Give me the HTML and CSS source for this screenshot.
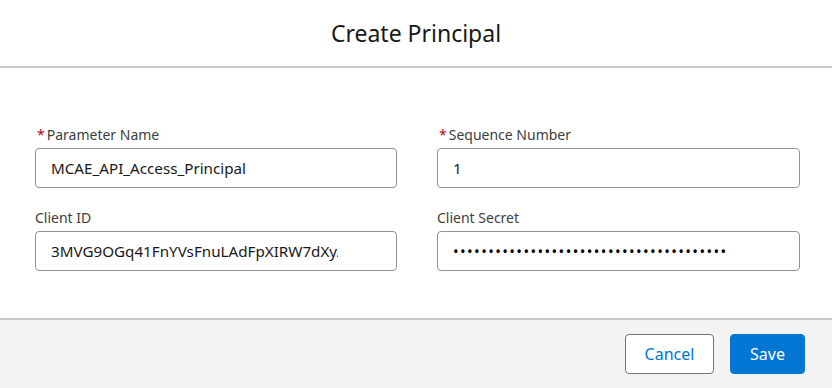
FILE: index.html
```html
<!DOCTYPE html>
<html lang="en">
<head>
    <meta charset="UTF-8">
    <title>Create Principal</title>
    <link rel="stylesheet" href="styles.css">
</head>
<body>
    <div class="modal">
        <!-- Cabeçalho -->
        <header class="modal-header">
            <h2 class="modal-title">Create Principal</h2>
        </header>

        <!-- Formulário -->
        <form class="modal-body">
            <div class="field">
                <label for="param-name"><abbr class="required" title="required">*</abbr>Parameter Name</label>
                <input type="text" id="param-name" value="MCAE_API_Access_Principal">
            </div>
            <div class="field">
                <label for="seq-number"><abbr class="required" title="required">*</abbr>Sequence Number</label>
                <input type="text" id="seq-number" value="1">
            </div>
            <div class="field">
                <label for="client-id">Client ID</label>
                <input type="text" id="client-id" class="clipped" value="3MVG9OGq41FnYVsFnuLAdFpXIRW7dXyA8hJ2kLmQ">
            </div>
            <div class="field">
                <label for="client-secret">Client Secret</label>
                <input type="password" id="client-secret" value="aaaaaaaaaaaaaaaaaaaaaaaaaaaaaaaaaaaaaaa">
            </div>
        </form>

        <!-- Rodapé -->
        <footer class="modal-footer">
            <button type="button" class="btn btn-neutral">Cancel</button>
            <button type="button" class="btn btn-brand">Save</button>
        </footer>
    </div>
</body>
</html>
```

FILE: styles.css
```css
/* Base */
body {
    margin: 0;
    font-family: "Noto Sans", "Open Sans", sans-serif;
    background-color: #fff;
    color: #181818;
}

.modal {
    display: flex;
    flex-direction: column;
    height: 388px;
}

/* Cabeçalho */
.modal-header {
    height: 66px;
    display: flex;
    align-items: center;
    justify-content: center;
    border-bottom: 2px solid #c9c9c9;
}

.modal-title {
    margin: 0;
    font-size: 23px;
    font-weight: 400;
    color: #181818;
}

/* Corpo */
.modal-body {
    display: grid;
    grid-template-columns: 362px 363px;
    align-content: start;
    column-gap: 40px;
    row-gap: 21px;
    padding: 58px 32px 0 35px;
    flex: 1;
}

.field {
    display: flex;
    flex-direction: column;
}

.field label {
    font-size: 14px;
    line-height: 18px;
    margin-bottom: 4px;
    color: #3e3e3c;
}

.required {
    color: #ba0517;
    text-decoration: none;
    margin: 0 2px 0 2px;
    border: none;
}

.field input {
    height: 40px;
    box-sizing: border-box;
    padding: 0 15px;
    border: 1px solid #939393;
    border-radius: 4px;
    font-family: inherit;
    font-size: 15.2px;
    color: #181818;
    background-color: #fff;
}

.field input.clipped {
    padding-right: 58px;
}

.field input[type="password"] {
    font-size: 15px;
    letter-spacing: 1.4px;
    color: #000;
}

/* Rodapé */
.modal-footer {
    height: 68px;
    display: flex;
    align-items: center;
    justify-content: flex-end;
    gap: 16px;
    padding: 0 27px 0 0;
    background-color: #f3f3f3;
    border-top: 2px solid #c9c9c9;
}

.btn {
    height: 40px;
    padding: 0 12px;
    border-radius: 4px;
    font-family: inherit;
    font-size: 16px;
    cursor: pointer;
}

.btn-neutral {
    background-color: #fff;
    color: #0176d3;
    border: 1px solid #747474;
    width: 89px;
}

.btn-brand {
    background-color: #0176d3;
    color: #fff;
    border: 1px solid #0176d3;
    width: 75px;
}
```
